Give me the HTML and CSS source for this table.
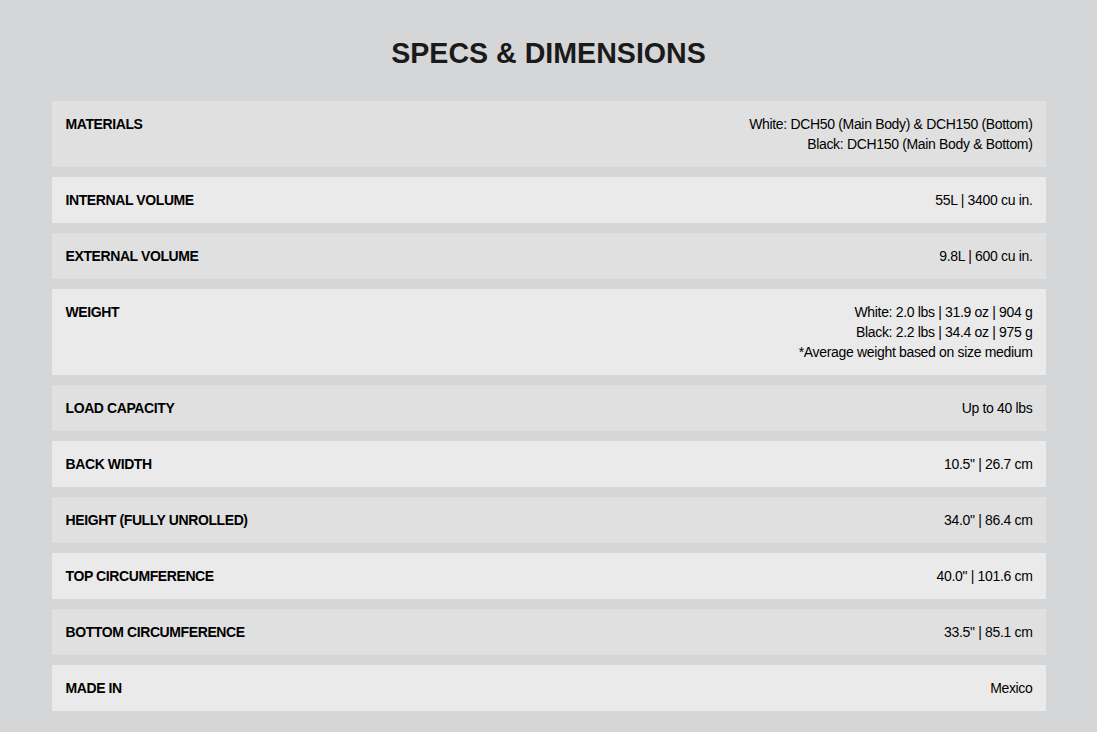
FILE: index.html
```html
<!DOCTYPE html>
<html lang="en">
<head>
<meta charset="utf-8">
<title>Specs &amp; Dimensions</title>
<link rel="stylesheet" href="styles.css">
</head>
<body>
<section class="specs">
  <h2 class="specs-title">SPECS &amp; DIMENSIONS</h2>
  <div class="specs-list">
    <div class="spec-row dark">
      <div class="spec-label">MATERIALS</div>
      <div class="spec-value">White: DCH50 (Main Body) &amp; DCH150 (Bottom)<br>Black: DCH150 (Main Body &amp; Bottom)</div>
    </div>
    <div class="spec-row light">
      <div class="spec-label">INTERNAL VOLUME</div>
      <div class="spec-value">55L | 3400 cu in.</div>
    </div>
    <div class="spec-row dark">
      <div class="spec-label">EXTERNAL VOLUME</div>
      <div class="spec-value">9.8L | 600 cu in.</div>
    </div>
    <div class="spec-row light">
      <div class="spec-label">WEIGHT</div>
      <div class="spec-value">White: 2.0 lbs | 31.9 oz | 904 g<br>Black: 2.2 lbs | 34.4 oz | 975 g<br>*Average weight based on size medium</div>
    </div>
    <div class="spec-row dark">
      <div class="spec-label">LOAD CAPACITY</div>
      <div class="spec-value">Up to 40 lbs</div>
    </div>
    <div class="spec-row light">
      <div class="spec-label">BACK WIDTH</div>
      <div class="spec-value">10.5" | 26.7 cm</div>
    </div>
    <div class="spec-row dark">
      <div class="spec-label">HEIGHT (FULLY UNROLLED)</div>
      <div class="spec-value">34.0" | 86.4 cm</div>
    </div>
    <div class="spec-row light">
      <div class="spec-label">TOP CIRCUMFERENCE</div>
      <div class="spec-value">40.0" | 101.6 cm</div>
    </div>
    <div class="spec-row dark">
      <div class="spec-label">BOTTOM CIRCUMFERENCE</div>
      <div class="spec-value">33.5" | 85.1 cm</div>
    </div>
    <div class="spec-row light">
      <div class="spec-label">MADE IN</div>
      <div class="spec-value">Mexico</div>
    </div>
  </div>
</section>
</body>
</html>
```
FILE: styles.css
```css
html, body {
  margin: 0;
  padding: 0;
  background: #d5d6d8;
}
body {
  font-family: "Liberation Sans", Arial, Helvetica, sans-serif;
  color: #000;
}
.specs {
  max-width: 994px;
  margin: 0 auto;
  padding: 37px 0 20px;
}
.specs-title {
  margin: 0 0 32px;
  font-size: 28.6px;
  line-height: 32px;
  font-weight: 700;
  text-align: center;
  color: #1a1a1a;
}
.specs-list {
  display: flex;
  flex-direction: column;
  gap: 10px;
}
.spec-row {
  display: flex;
  justify-content: space-between;
  align-items: flex-start;
  padding: 13px 13px 13px 14px;
  font-size: 14px;
  line-height: 20px;
}
.spec-row.dark { background: #e0e0e0; }
.spec-row.light { background: #eaeaea; }
.spec-label {
  font-weight: 700;
  letter-spacing: -0.4px;
}
.spec-value {
  text-align: right;
  letter-spacing: -0.33px;
}
```
